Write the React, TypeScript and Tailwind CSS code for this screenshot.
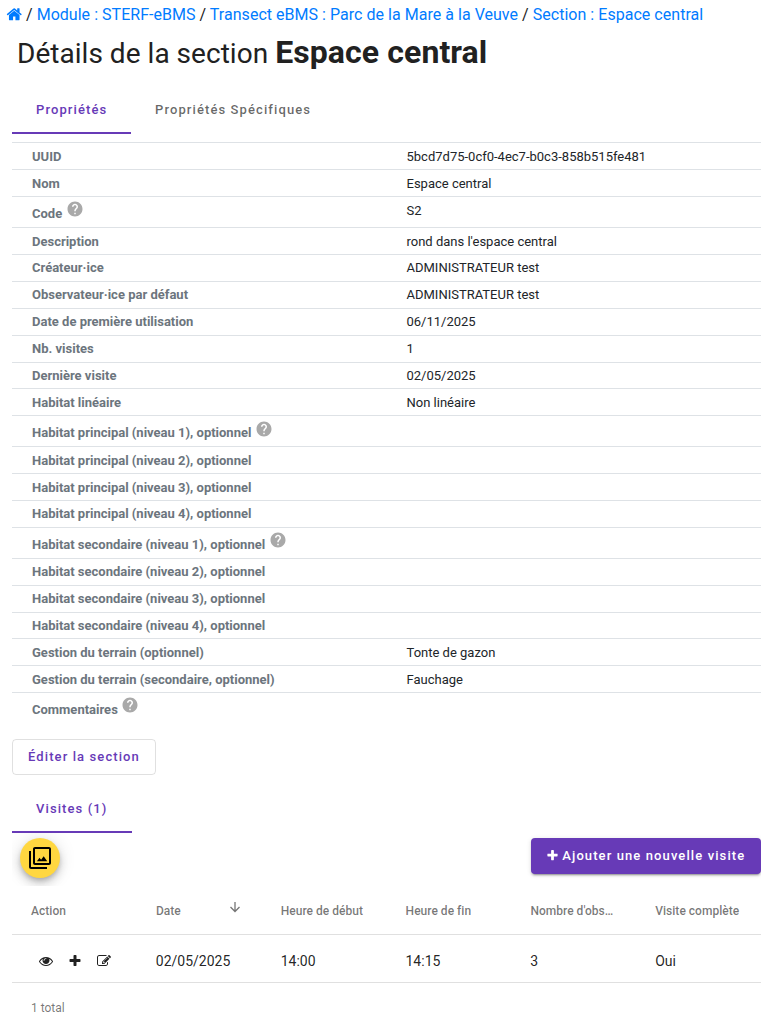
import type { ReactNode } from 'react'
import { MdHelp } from 'react-icons/md'

type Property = {
  label: string
  value?: string
  help?: boolean
}

const properties: Property[] = [
  { label: 'UUID', value: '5bcd7d75-0cf0-4ec7-b0c3-858b515fe481' },
  { label: 'Nom', value: 'Espace central' },
  { label: 'Code', value: 'S2', help: true },
  { label: 'Description', value: "rond dans l'espace central" },
  { label: 'Créateur·ice', value: 'ADMINISTRATEUR test' },
  { label: 'Observateur·ice par défaut', value: 'ADMINISTRATEUR test' },
  { label: 'Date de première utilisation', value: '06/11/2025' },
  { label: 'Nb. visites', value: '1' },
  { label: 'Dernière visite', value: '02/05/2025' },
  { label: 'Habitat linéaire', value: 'Non linéaire' },
  { label: 'Habitat principal (niveau 1), optionnel', help: true },
  { label: 'Habitat principal (niveau 2), optionnel' },
  { label: 'Habitat principal (niveau 3), optionnel' },
  { label: 'Habitat principal (niveau 4), optionnel' },
  { label: 'Habitat secondaire (niveau 1), optionnel', help: true },
  { label: 'Habitat secondaire (niveau 2), optionnel' },
  { label: 'Habitat secondaire (niveau 3), optionnel' },
  { label: 'Habitat secondaire (niveau 4), optionnel' },
  { label: 'Gestion du terrain (optionnel)', value: 'Tonte de gazon' },
  { label: 'Gestion du terrain (secondaire, optionnel)', value: 'Fauchage' },
  { label: 'Commentaires', help: true },
]

const breadcrumb = [
  'Module : STERF-eBMS',
  'Transect eBMS : Parc de la Mare à la Veuve',
  'Section : Espace central',
]

const columns = ['Action', 'Date', 'Heure de début', 'Heure de fin', "Nombre d'obs…", 'Visite complète']

const visit = ['02/05/2025', '14:00', '14:15', '3', 'Oui']

const iconPaths = {
  home: 'M1472 992v480q0 26-19 45t-45 19h-384v-384h-256v384h-384q-26 0-45-19t-19-45v-480q0-1 .5-3t.5-3l575-474 575 474q1 2 1 6zm223-69l-62 74q-8 9-21 11h-3q-13 0-21-7l-692-577-692 577q-12 8-24 7-13-2-21-11l-62-74q-8-10-7-23.5t11-21.5l719-599q32-26 76-26t76 26l244 204v-195q0-14 9-23t23-9h192q14 0 23 9t9 23v408l219 182q10 8 11 21.5t-7 23.5z',
  eye: 'M1664 960q-152-236-381-353 61 104 61 225 0 185-131.5 316.5t-316.5 131.5-316.5-131.5-131.5-316.5q0-121 61-225-229 117-381 353 133 205 333.5 326.5t434.5 121.5 434.5-121.5 333.5-326.5zm-720-384q0-20-14-34t-34-14q-125 0-214.5 89.5t-89.5 214.5q0 20 14 34t34 14 34-14 14-34q0-86 61-147t147-61q20 0 34-14t14-34zm848 384q0 34-20 69-140 230-376.5 368.5t-499.5 138.5-499.5-139-376.5-368q-20-35-20-69t20-69q140-229 376.5-368t499.5-139 499.5 139 376.5 368q20 35 20 69z',
  plus: 'M1600 736v192q0 40-28 68t-68 28h-416v416q0 40-28 68t-68 28h-192q-40 0-68-28t-28-68v-416h-416q-40 0-68-28t-28-68v-192q0-40 28-68t68-28h416v-416q0-40 28-68t68-28h192q40 0 68 28t28 68v416h416q40 0 68 28t28 68z',
  edit: 'M888 1184l116-116-152-152-116 116v56h96v96h56zm440-720q-16-16-33 1l-350 350q-17 17-1 33t33-1l350-350q17-17 1-33zm80 594v190q0 119-84.5 203.5t-203.5 84.5h-832q-119 0-203.5-84.5t-84.5-203.5v-832q0-119 84.5-203.5t203.5-84.5h832q63 0 117 25 15 7 18 23 3 17-9 29l-49 49q-14 14-32 8-23-6-45-6h-832q-66 0-113 47t-47 113v832q0 66 47 113t113 47h832q66 0 113-47t47-113v-126q0-13 9-22l64-64q15-15 35-7t20 29zm-96-738l288 288-672 672h-288v-288zm444 132l-92 92-288-288 92-92q28-28 68-28t68 28l152 152q28 28 28 68t-28 68z',
}

function Icon({ name, className }: { name: keyof typeof iconPaths; className: string }) {
  return (
    <svg viewBox="0 0 1792 1792" fill="currentColor" className={className}>
      <path d={iconPaths[name]} />
    </svg>
  )
}

function GalleryIcon() {
  return (
    <svg viewBox="0 0 24 24" fill="currentColor" className="h-6 w-6">
      <path d="M3 5H1v16c0 1.1.9 2 2 2h16v-2H3V5zm18-4H7c-1.1 0-2 .9-2 2v14c0 1.1.9 2 2 2h14c1.1 0 2-.9 2-2V3c0-1.1-.9-2-2-2zm0 16H7V3h14v14z" />
      <path d="M8.9 15.2L11.5 11.7l1.6 2 2.6-3.4 3.5 4.9z" />
    </svg>
  )
}

function Tab({ active, className, children }: { active?: boolean; className: string; children: ReactNode }) {
  return (
    <button
      className={`flex h-12 items-center border-b-2 pl-6 text-[13px] font-medium tracking-[1.1px] whitespace-nowrap ${
        active ? 'border-[#673ab7] text-[#673ab7]' : 'border-transparent text-black/60'
      } ${className}`}
    >
      {children}
    </button>
  )
}

function PropertyRow({ label, value, help }: Property) {
  return (
    <div className={`flex border-t border-[#dee2e6] pt-[3.5px] text-[13px] leading-[19.5px] ${help ? 'h-[30.9px]' : 'h-[26.9px]'}`}>
      <div className="flex w-[374.5px] pl-5 font-bold text-[#6c757d]">
        <span className={help ? 'pt-[3.6px]' : ''}>{label}</span>
        {help && <MdHelp className="-mt-[0.3px] ml-[3.5px] h-[18px] w-[18px] text-[#a9a9a9]" />}
      </div>
      <div className="pl-5 text-[#212529]">{value}</div>
    </div>
  )
}

export default function App() {
  return (
    <div className="h-[1032px] overflow-hidden bg-white pr-[15px] pl-3 font-[Roboto,sans-serif] text-[#212121]">
      <nav className="-ml-[6px] flex h-7 items-center pt-px text-base tracking-[0.03px] whitespace-pre">
        <Icon name="home" className="-mr-[0.5px] mb-px h-[16.5px] w-[16.5px] text-[#007bff]" />
        {breadcrumb.map((item) => (
          <span key={item}>
            {' / '}
            <a className="text-[#007bff]">{item}</a>
          </span>
        ))}
      </nav>

      <h3 className="h-[58px] pt-1 pl-[5px] text-[28px] leading-10 tracking-[0.03px] whitespace-nowrap">
        Détails de la section <strong className="text-[32px] font-bold tracking-[0.09px]">Espace central</strong>
      </h3>

      <div className="flex">
        <Tab active className="w-[119px] pt-px">Propriétés</Tab>
        <Tab className="w-[204px] pt-px">Propriétés Spécifiques</Tab>
      </div>

      <div className="mt-[8.42px]">
        {properties.map((property) => (
          <PropertyRow key={property.label} {...property} />
        ))}
      </div>

      <button className="mt-[15.58px] flex h-9 w-36 items-center rounded border border-black/12 pl-[15px] text-[13px] font-medium tracking-[1.1px] whitespace-nowrap text-[#673ab7]">
        Éditer la section
      </button>

      <div className="mt-[10px] flex">
        <Tab active className="w-[120px] pt-[2px]">Visites (1)</Tab>
      </div>

      <div className="flex h-[53px] items-start justify-between overflow-hidden pt-[5px] pb-2">
        <button className="ml-2 flex h-10 w-10 items-center justify-center rounded-full bg-[#ffd740] text-black shadow-[0_3px_5px_-1px_rgba(0,0,0,0.2),0_6px_10px_0_rgba(0,0,0,0.14),0_1px_18px_0_rgba(0,0,0,0.12)]">
          <GalleryIcon />
        </button>
        <button className="flex h-9 w-[230px] items-center rounded bg-[#673ab7] pl-[14.5px] text-[13px] font-medium tracking-[1.1px] whitespace-nowrap text-white shadow-[0_3px_1px_-2px_rgba(0,0,0,0.2),0_2px_2px_0_rgba(0,0,0,0.14),0_1px_5px_0_rgba(0,0,0,0.12)]">
          <Icon name="plus" className="mr-[3.8px] mb-px h-[13px] w-[13px]" />
          Ajouter une nouvelle visite
        </button>
      </div>

      <div className="grid h-[49px] grid-cols-6 items-center border-b border-black/12 pt-[2px] text-xs font-medium tracking-[0.02px] text-black/54">
        {columns.map((column) => (
          <div key={column} className="flex items-center justify-between pl-[19.1px] whitespace-nowrap">
            {column}
            {column === 'Date' && (
              <svg viewBox="0 0 12 12" fill="none" stroke="currentColor" strokeWidth="1.3" className="mr-[20.5px] mb-[7px] h-3 w-3 shrink-0">
                <path d="M6 1v9.5M1.5 6L6 10.5 10.5 6" />
              </svg>
            )}
          </div>
        ))}
      </div>

      <div className="grid h-12 grid-cols-6 items-center border-b border-black/12 pt-[5px] text-sm text-black/87">
        <div className="flex items-center gap-[14.7px] pl-[27.2px]">
          <Icon name="eye" className="h-[14px] w-[14px]" />
          <Icon name="plus" className="h-[14px] w-[14px]" />
          <Icon name="edit" className="h-[14px] w-[14px]" />
        </div>
        {visit.map((cell) => (
          <div key={cell} className="pl-[19px]">
            {cell}
          </div>
        ))}
      </div>

      <div className="flex h-[50px] items-center pl-[19px] text-xs text-black/54">1 total</div>
    </div>
  )
}
